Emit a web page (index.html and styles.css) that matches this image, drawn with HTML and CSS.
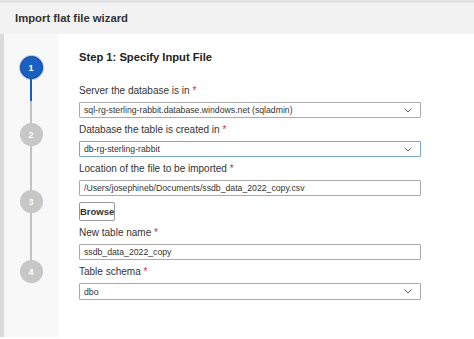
FILE: index.html
```html
<!DOCTYPE html>
<html lang="en">
<head>
<meta charset="utf-8">
<title>Import flat file wizard</title>
<link rel="stylesheet" href="styles.css">
</head>
<body>
<div class="topbar"></div>
<header class="header">Import flat file wizard</header>
<div class="wizard">
  <aside class="rail">
    <div class="step step-active">1</div>
    <div class="connector connector-progress"></div>
    <div class="step">2</div>
    <div class="connector"></div>
    <div class="step">3</div>
    <div class="connector connector-long"></div>
    <div class="step">4</div>
  </aside>
  <main class="content">
    <h1 class="heading">Step 1: Specify Input File</h1>
    <div class="form">
      <div class="field">
        <label class="label">Server the database is in <span class="req">*</span></label>
        <div class="box select"><span class="value">sql-rg-sterling-rabbit.database.windows.net (sqladmin)</span><svg class="chev" width="8" height="5" viewBox="0 0 8 5"><polyline points="0.5,0.5 4,4 7.5,0.5" fill="none" stroke="#666" stroke-width="1"/></svg></div>
      </div>
      <div class="field">
        <label class="label">Database the table is created in <span class="req">*</span></label>
        <div class="box select focused"><span class="value">db-rg-sterling-rabbit</span><svg class="chev" width="8" height="5" viewBox="0 0 8 5"><polyline points="0.5,0.5 4,4 7.5,0.5" fill="none" stroke="#666" stroke-width="1"/></svg></div>
      </div>
      <div class="field">
        <label class="label">Location of the file to be imported <span class="req">*</span></label>
        <div class="box"><span class="value">/Users/josephineb/Documents/ssdb_data_2022_copy.csv</span></div>
      </div>
      <button class="browse" type="button">Browse</button>
      <div class="field">
        <label class="label">New table name <span class="req">*</span></label>
        <div class="box"><span class="value">ssdb_data_2022_copy</span></div>
      </div>
      <div class="field">
        <label class="label">Table schema <span class="req">*</span></label>
        <div class="box select tall"><span class="value">dbo</span><svg class="chev" width="8" height="5" viewBox="0 0 8 5"><polyline points="0.5,0.5 4,4 7.5,0.5" fill="none" stroke="#666" stroke-width="1"/></svg></div>
      </div>
    </div>
  </main>
</div>
</body>
</html>
```

FILE: styles.css
```css
* { box-sizing: border-box; }

html, body {
  margin: 0;
  padding: 0;
  background: #ffffff;
  font-family: "Liberation Sans", Arial, sans-serif;
  color: #333333;
}

body {
  width: 474px;
  height: 339px;
  overflow: hidden;
}

.topbar {
  height: 3px;
  background: #e3e3e3;
}

.header {
  height: 31px;
  background: #f2f2f2;
  padding-left: 15px;
  display: flex;
  align-items: center;
  font-size: 11.3px;
  font-weight: bold;
  color: #333333;
  padding-bottom: 1px;
}

.wizard {
  display: flex;
  height: 303px;
}

.rail {
  width: 58px;
  flex: none;
  background: #f8f8f8;
  border-left: 4px solid #dadada;
  display: flex;
  flex-direction: column;
  align-items: center;
  padding-top: 22px;
}

.step {
  width: 23px;
  height: 23px;
  border-radius: 50%;
  background: #c7c7c7;
  color: #ffffff;
  font-size: 9px;
  font-weight: bold;
  display: flex;
  align-items: center;
  justify-content: center;
  flex: none;
}

.step-active {
  background: #1a5fc2;
  border: 1.5px solid #0f4597;
  box-shadow: 0 0 0 1px #a9c6ec;
}

.connector {
  width: 2px;
  height: 44px;
  background: #c2c2c2;
  flex: none;
}

.connector-progress {
  background: linear-gradient(to bottom, #1a5fc2 0, #1a5fc2 22px, #c2c2c2 22px);
}

.connector-long {
  height: 47px;
}

.content {
  flex: 1;
  padding: 15px 0 0 21px;
}

.heading {
  margin: 0 0 19px 0;
  font-size: 11.2px;
  line-height: 16px;
  font-weight: bold;
  color: #222222;
}

.form {
  display: flex;
  flex-direction: column;
  align-items: flex-start;
  gap: 5px;
  width: 342px;
}

.field {
  display: flex;
  flex-direction: column;
  gap: 4px;
  width: 100%;
}

.label {
  font-size: 10px;
  line-height: 14px;
  color: #333333;
}

.req {
  color: #d13438;
}

.box {
  height: 16px;
  width: 100%;
  border: 1px solid #ababab;
  border-radius: 1px;
  background: #ffffff;
  display: flex;
  align-items: center;
  padding: 0 8px 0 4px;
  font-size: 8.7px;
  color: #333333;
}

.box.tall {
  height: 17px;
}

.box.focused {
  border-color: #7aa6da;
}

.value {
  flex: 1;
  white-space: nowrap;
  overflow: hidden;
}

.chev {
  flex: none;
}

.browse {
  margin-top: 1px;
  height: 19px;
  width: 36px;
  padding: 0;
  border: 1px solid #9a9a9a;
  border-radius: 2px;
  background: #ffffff;
  font-family: "Liberation Sans", Arial, sans-serif;
  font-size: 9.5px;
  font-weight: bold;
  color: #333333;
}
```
